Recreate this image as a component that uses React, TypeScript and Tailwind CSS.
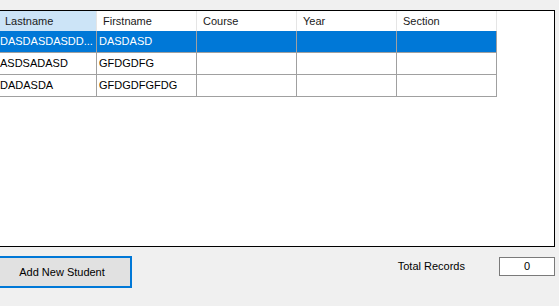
import React from "react";

const cols = [
  { name: "Lastname", w: "w-[97px]" },
  { name: "Firstname", w: "w-[100px]" },
  { name: "Course", w: "w-[100px]" },
  { name: "Year", w: "w-[100px]" },
  { name: "Section", w: "w-[100px]" },
];

const rows = [
  ["DASDASDASDD...", "DASDASD", "", "", ""],
  ["ASDSADASD", "GFDGDFG", "", "", ""],
  ["DADASDA", "GFDGDFGFDG", "", "", ""],
];

export default function App() {
  return (
    <div
      className="w-[559px] h-[306px] bg-[#f0f0f0] overflow-hidden pt-[10px] text-[11px] text-black"
      style={{ fontFamily: '"Liberation Sans", Arial, sans-serif' }}
    >
      <div className="-ml-px w-[556px] h-[237px] border border-black bg-white">
        <div className="w-fit">
          <div className="flex h-[20px]">
            {cols.map((c, i) => (
              <div
                key={c.name}
                className={`${c.w} h-full flex items-center border-r border-[#e5e5e5] text-[#1a1a1a] ${
                  i === 0 ? "bg-[#cce4f7] pl-[5px]" : "bg-white pl-[6px]"
                }`}
              >
                {c.name}
              </div>
            ))}
          </div>
          {rows.map((r, ri) => (
            <div
              key={ri}
              className={`flex h-[22px] border-b border-[#a0a0a0] ${
                ri === 0 ? "bg-[#0078d7] text-white" : "bg-white"
              }`}
            >
              {r.map((cell, ci) => (
                <div
                  key={ci}
                  className={`${cols[ci].w} h-full flex items-center border-r border-[#a0a0a0] whitespace-nowrap overflow-hidden ${
                    ci === 0 ? "pl-0" : "pl-[2px]"
                  }`}
                >
                  {cell}
                </div>
              ))}
            </div>
          ))}
        </div>
      </div>
      <div className="flex items-start">
        <button className="-ml-[8px] mt-[9px] w-[140px] h-[32px] bg-[#e1e1e1] border-2 border-[#0078d7] flex items-center justify-center">
          Add New Student
        </button>
        <div className="ml-auto mt-[10px] flex items-center h-[19px]">
          <span className="mr-[34px]">Total Records</span>
          <div className="w-[56px] h-[19px] border border-[#7a7a7a] bg-white flex items-center justify-center mr-[4px]">
            0
          </div>
        </div>
      </div>
    </div>
  );
}
